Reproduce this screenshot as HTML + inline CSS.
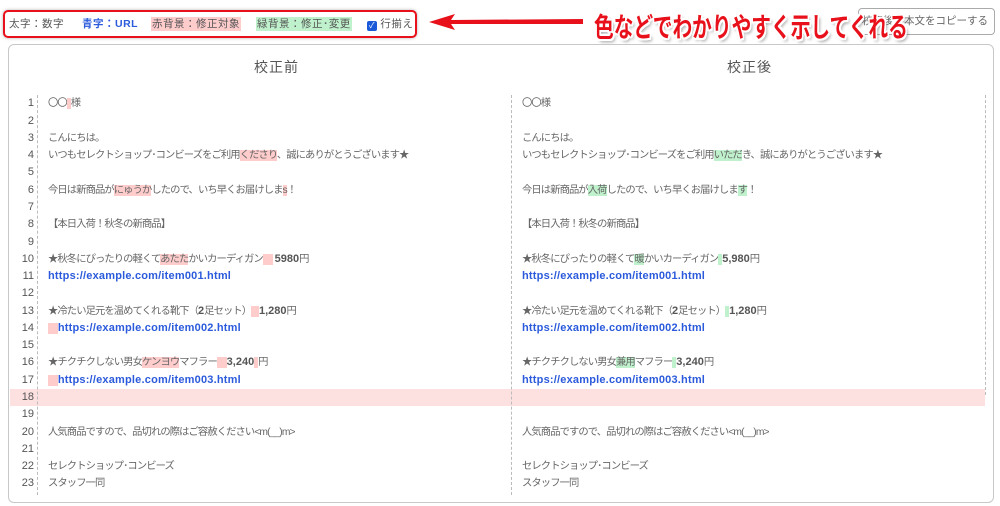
<!DOCTYPE html>
<html><head><meta charset="utf-8"><style>
*{margin:0;padding:0;box-sizing:border-box}
body{width:1000px;height:506px;background:#fff;position:relative;overflow:hidden;font-family:"Liberation Sans","Noto Sans CJK JP",sans-serif;color:#555;font-size:11px}
.legend{position:absolute;left:3px;top:10px;width:414px;height:28px;border:2px solid #e8101a;border-radius:5px;box-shadow:0 0 3px rgba(0,0,0,.3)}
.legend span{position:absolute;top:5px;font-size:10.5px;line-height:14px;letter-spacing:.5px}
.box{position:absolute;left:8px;top:44px;width:986px;height:459px;border:1px solid #c8c8c8;border-radius:6px}
.h{position:absolute;top:57px;font-size:14px;color:#555;letter-spacing:1px}
.n{position:absolute;width:26px;text-align:right;left:8px;font-size:11px;color:#555}
.t{position:absolute;white-space:nowrap;font-size:10.3px;color:#666;line-height:15px;letter-spacing:-0.9px}
.r{background:#fcc}.g{background:#bff2cc}
.u{color:#2b5bdc;font-weight:bold;letter-spacing:.2px;font-size:11px}
b{font-weight:bold;color:#555;letter-spacing:0;font-size:11px}
.vl{position:absolute;width:0;border-left:1px dashed #bbb}
.big{position:absolute;left:594px;top:6px;font-size:27px;font-weight:bold;color:#e8101a;white-space:nowrap;transform:scaleX(.73);transform-origin:left top;text-shadow:-2px -2px 0 #fff,2px -2px 0 #fff,-2px 2px 0 #fff,2px 2px 0 #fff,0 2px 0 #fff,2px 0 0 #fff,0 -2px 0 #fff,-2px 0 0 #fff,3px 3px 4px rgba(0,0,0,.4)}
</style></head><body>
<div class="legend">
<span style="left:4px">太字：数字</span>
<span style="left:77px;color:#2b5bdc;font-weight:bold">青字：URL</span>
<span style="left:146px;background:#fcc;padding:0 1px">赤背景：修正対象</span>
<span style="left:251px;background:#bff2cc;padding:0 1px">緑背景：修正･変更</span>
<span style="left:362px;"><i style="display:inline-block;width:10px;height:10px;background:#1a5ad8;border-radius:2px;vertical-align:-1px;color:#fff;font-size:8px;font-style:normal;text-align:center;line-height:10px">✓</i> 行揃え</span>
</div>
<svg style="position:absolute;left:425px;top:12px" width="160" height="20"><path d="M4 10 L30 2 L26 8 L158 7 L158 12 L26 12 L30 18 Z" fill="#e8101a"/></svg>
<div style="position:absolute;left:858px;top:8px;width:137px;height:27px;border:1px solid #aaa;border-radius:4px;font-size:10.5px;line-height:25px;text-align:right;padding-right:6px;color:#666">校正後の本文をコピーする</div>
<div class="big">色などでわかりやすく示してくれる</div>
<div class="box"></div>
<div class="h" style="left:254px">校正前</div>
<div class="h" style="left:727px">校正後</div>
<div style="position:absolute;left:10px;top:389px;width:975px;height:17px;background:#fde0e0"></div>
<div class="vl" style="left:37px;top:95px;height:400px"></div>
<div class="vl" style="left:511px;top:95px;height:400px"></div>
<div class="vl" style="left:985px;top:95px;height:300px"></div>
<div id="c"></div>
<script>
var L=[
['〇〇<span class="r">&nbsp;&nbsp;</span>様','〇〇様'],['',''],
['こんにちは。','こんにちは。'],
['いつもセレクトショップ･コンビーズをご利用<span class="r">くださり</span>、誠にありがとうございます★','いつもセレクトショップ･コンビーズをご利用<span class="g">いただ</span>き、誠にありがとうございます★'],['',''],
['今日は新商品が<span class="r">にゅうか</span>したので、いち早くお届けしま<span class="r">s</span>！','今日は新商品が<span class="g">入荷</span>したので、いち早くお届けしま<span class="g">す</span>！'],['',''],
['【本日入荷！秋冬の新商品】','【本日入荷！秋冬の新商品】'],['',''],
['★秋冬にぴったりの軽くて<span class="r">あたた</span>かいカーディガン<span class="r">&nbsp;&nbsp;&nbsp;&nbsp;&nbsp;</span> <b>5980</b>円','★秋冬にぴったりの軽くて<span class="g">暖</span>かいカーディガン<span class="g">&nbsp;&nbsp;</span><b>5,980</b>円'],
['<span class="u">https://example.com/item001.html</span>','<span class="u">https://example.com/item001.html</span>'],['',''],
['★冷たい足元を温めてくれる靴下（<b>2</b>足セット）<span class="r">&nbsp;&nbsp;&nbsp;&nbsp;</span><b>1,280</b>円','★冷たい足元を温めてくれる靴下（<b>2</b>足セット）<span class="g">&nbsp;&nbsp;</span><b>1,280</b>円'],
['<span class="r">&nbsp;&nbsp;&nbsp;&nbsp;&nbsp;</span><span class="u">https://example.com/item002.html</span>','<span class="u">https://example.com/item002.html</span>'],['',''],
['★チクチクしない男女<span class="r">ケンヨウ</span>マフラー<span class="r">&nbsp;&nbsp;&nbsp;&nbsp;&nbsp;</span><b>3,240</b><span class="r">&nbsp;&nbsp;</span>円','★チクチクしない男女<span class="g">兼用</span>マフラー<span class="g">&nbsp;&nbsp;</span><b>3,240</b>円'],
['<span class="r">&nbsp;&nbsp;&nbsp;&nbsp;&nbsp;</span><span class="u">https://example.com/item003.html</span>','<span class="u">https://example.com/item003.html</span>'],['',''],['',''],
['人気商品ですので、品切れの際はご容赦ください&lt;m(__)m&gt;','人気商品ですので、品切れの際はご容赦ください&lt;m(__)m&gt;'],['',''],
['セレクトショップ･コンビーズ','セレクトショップ･コンビーズ'],['スタッフ一同','スタッフ一同']];
var h='';for(var i=0;i<L.length;i++){var y=95.4+i*17.27;
h+='<div class="n" style="top:'+(y+2)+'px">'+(i+1)+'</div>';
h+='<div class="t" style="left:48px;top:'+(y+1)+'px">'+L[i][0]+'</div>';
h+='<div class="t" style="left:522px;top:'+(y+1)+'px">'+L[i][1]+'</div>';}
document.getElementById('c').innerHTML=h;
</script>
</body></html>
